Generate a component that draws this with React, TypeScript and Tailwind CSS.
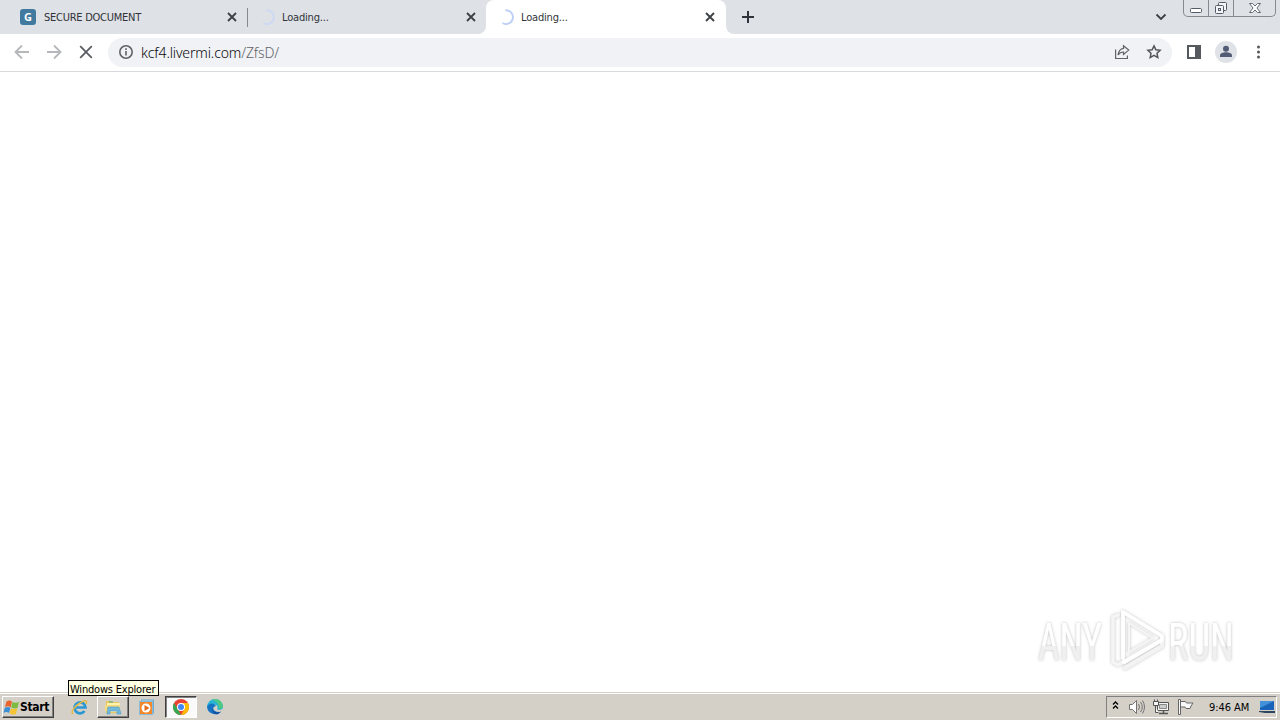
import React from 'react';

const UI = "font-['DejaVu_Sans_Condensed','DejaVu_Sans',sans-serif] [font-stretch:condensed]";

function Close({ className = '' }: { className?: string }) {
  return (
    <svg className={`shrink-0 ${className}`} width="10" height="10" viewBox="0 0 10 10" stroke="#3c4043" strokeWidth="1.8">
      <path d="M1 1l8 8M9 1L1 9" />
    </svg>
  );
}

function Spinner({ color }: { color: string }) {
  return (
    <svg className="shrink-0" width="16" height="16" viewBox="0 0 16 16" fill="none" stroke={color} strokeWidth="2">
      <path d="M7.500 1.200A6.900 6.900 0 1 1 4.500 14" />
    </svg>
  );
}

function TabBar() {
  return (
    <header className="flex h-[34px] shrink-0 bg-[#dee1e6] text-[#303338]">
      <div className="flex h-[34px] w-[247px] items-center pl-5">
        <div className="flex size-4 items-center justify-center rounded-[3px] bg-[#41799f] text-white">
          <span className="font-['Open_Sans',sans-serif] text-[11px] leading-4 font-bold [font-stretch:normal]">G</span>
        </div>
        <span className="ml-2 w-[183px] pt-[2px] text-[11px] tracking-[-0.25px]">SECURE DOCUMENT</span>
        <Close />
      </div>
      <div className="mt-2 h-[19px] w-px bg-[#858991]" />
      <div className="flex h-[34px] w-[238px] items-center bg-[#dee1e6] pl-[11px]">
        <Spinner color="#cdd8f3" />
        <span className="ml-[7px] w-[184px] pt-[2px] text-[11px] tracking-[-0.18px]">Loading...</span>
        <Close />
      </div>
      <div className="relative flex h-[34px] w-[240px] items-center rounded-t-lg bg-white pl-3">
        <svg className="absolute bottom-0 -left-2" width="8" height="8" fill="#fff"><path d="M8 0v8H0a8 8 0 0 0 8-8" /></svg>
        <svg className="absolute -right-2 bottom-0" width="8" height="8" fill="#fff"><path d="M0 0v8h8a8 8 0 0 1-8-8" /></svg>
        <Spinner color="#bfd0f7" />
        <span className="ml-[7px] w-[184px] pt-[2px] text-[11px] tracking-[-0.18px]">Loading...</span>
        <Close />
      </div>
      <svg className="mt-[11px] ml-4" width="12" height="12" stroke="#303339" strokeWidth="2"><path d="M6 0v12M0 6h12" /></svg>
      <svg className="mt-[13px] ml-[401px]" width="12" height="8" fill="none" stroke="#3c4043" strokeWidth="1.8"><path d="M1.5 1.5L6 6l4.5-4.5" /></svg>
      <div className="ml-4 flex h-[17px] w-[93px] rounded-b-[5px] border border-t-0 border-[#858990]">
        <div className="flex w-[25px] justify-center border-r border-[#858990] pt-2">
          <svg width="12" height="5" fill="#fff" stroke="#555b67"><rect x=".5" y=".5" width="11" height="4" rx="1" /></svg>
        </div>
        <div className="flex w-[25px] justify-center border-r border-[#858990] pt-[2px]">
          <svg width="13" height="13" fill="#f4f5f7" stroke="#555b67">
            <rect x="3.5" y=".5" width="8" height="8" rx="1" /><rect x=".5" y="3.5" width="8" height="8" rx="1" /><rect x="3.5" y="6.5" width="2" height="2" />
          </svg>
        </div>
        <div className="flex flex-1 justify-center pt-[3px]">
          <svg width="12" height="10" fill="#fff" stroke="#636975" strokeWidth="1"><path d="M.5.5h3L6 3 8.500.5h3L8 5l3.500 4.500h-3L6 7 3.500 9.500h-3L4 5z" /></svg>
        </div>
      </div>
    </header>
  );
}

function Toolbar() {
  return (
    <nav className="flex h-[38px] shrink-0 items-center border-b border-[#d7d9dc] bg-white pl-[14px]">
      <svg className="-mt-px" width="16" height="16" fill="none" stroke="#b5b7ba" strokeWidth="1.8"><path d="M15 8H2M8 1.500L1.500 8 8 14.500" /></svg>
      <svg className="-mt-px ml-4" width="16" height="16" fill="none" stroke="#b5b7ba" strokeWidth="1.8"><path d="M1 8h13M8 1.500L14.500 8 8 14.500" /></svg>
      <svg className="-mt-px ml-4" width="16" height="16" fill="none" stroke="#5a5d61" strokeWidth="1.8"><path d="M2.200 2.200l11.600 11.600M13.800 2.200L2.200 13.800" /></svg>
      <div className="ml-[14px] flex h-[29px] w-[1064px] items-center rounded-full bg-[#f0f2f5] pl-[11px]">
        <svg className="-mt-px" width="14" height="14" fill="none" stroke="#5f6368" strokeWidth="1.6"><circle cx="7" cy="7" r="6.200" /><path d="M7 6v4.500M7 3.300v1.600" /></svg>
        <div className="ml-2 w-[973px] pt-px font-['Noto_Sans',sans-serif] text-[14px] leading-[18px] font-light tracking-[-0.13px] text-[#08090b] [font-stretch:normal]">
          kcf4.livermi.com<span className="text-[#5f6368]">/ZfsD/</span>
        </div>
        <svg className="-mt-[2px]" width="16" height="16" fill="none" stroke="#5f6368" strokeWidth="1.2">
          <path d="M1.600 5.500v9h11.800v-3M9.500 1.700l5.200 4.400-5.200 4.400V8C7 8 5.400 9 4 11c.5-3.500 2.200-6.100 5.500-6.600z" />
        </svg>
        <svg className="-mt-px ml-4" width="16" height="16" fill="none" stroke="#51555a" strokeWidth="1.5">
          <path d="M8 1.900l1.850 3.900 4.250.55-3.100 2.950.8 4.250L8 11.450l-3.800 2.100.8-4.250L1.900 6.350l4.250-.55z" />
        </svg>
      </div>
      <svg className="-mt-px ml-[15px]" width="14" height="14" fill="none" stroke="#55585d" strokeWidth="2"><path d="M1 1h12v12H1z" /><path d="M9 1h4v12H9z" fill="#55585d" /></svg>
      <svg className="-mt-px ml-[14px]" width="22" height="22"><circle cx="11" cy="11" r="11" fill="#dfe2e6" /><circle cx="11" cy="7.700" r="3" fill="#525d75" /><path d="M5 16v-1.500c0-2 3-3.200 6-3.200s6 1.200 6 3.200V16z" fill="#525d75" /></svg>
      <svg className="-mt-px ml-[19px]" width="5" height="14" fill="#55585d"><circle cx="2.500" cy="2" r="1.500" /><circle cx="2.500" cy="7" r="1.500" /><circle cx="2.500" cy="12" r="1.500" /></svg>
    </nav>
  );
}

function Watermark() {
  return (
    <svg className="mr-9 mb-4 overflow-visible" width="216" height="72" viewBox="0 0 216 72">
      <defs>
        <filter id="soft" x="-20%" y="-20%" width="140%" height="140%">
          <feDropShadow dx="0" dy="0" stdDeviation="1.5" floodColor="#777" floodOpacity=".5" />
        </filter>
        <linearGradient id="face" x1="0" y1="0" x2="0" y2="1">
          <stop offset=".56" stopColor="#fff" /><stop offset=".57" stopColor="#f0f0f0" />
        </linearGradient>
      </defs>
      <g filter="url(#soft)" fill="url(#face)" fontFamily="Roboto" fontSize="51" fontWeight="400">
        <text x="10" y="55.500" textLength="64" lengthAdjust="spacingAndGlyphs">ANY</text>
        <text x="140" y="55.500" textLength="66" lengthAdjust="spacingAndGlyphs">RUN</text>
      </g>
      <g filter="url(#soft)" fill="none" strokeLinejoin="round" strokeLinecap="round">
        <path d="M90 11l-5 2v45l5 3 5-3" stroke="#f5f5f5" strokeWidth="3.500" />
        <path d="M97 64l37-22v-4" stroke="#f3f3f3" strokeWidth="4" />
        <path d="M95 54V8l39 24v4L96 58" stroke="#fff" strokeWidth="3.800" />
        <path d="M101 19l24 15-24 14z" stroke="#f5f5f5" strokeWidth="2" />
      </g>
    </svg>
  );
}

function Explorer() {
  return (
    <svg width="18" height="16" viewBox="0 0 18 16">
      <path d="M2 2h5l1 1h7v11H2z" fill="#e5c85e" /><path d="M3 4h13v9H3z" fill="#fff2ad" />
      <path d="M1 6h15v6H1z" fill="#f3db7d" /><path d="M4 8h11l2 7h-4v-3H6v3H3z" fill="#72b9dc" stroke="#4c9cc8" strokeWidth=".6" /><path d="M5 3h4" stroke="#50a878" />
    </svg>
  );
}

function Taskbar() {
  return (
    <footer className="flex h-7 shrink-0 items-start border-t border-[#d4d0c8] bg-[#d4d0c8] pl-[2px] text-black shadow-[inset_0_1px_0_#fff]">
      <button className="mt-[3px] flex h-[22px] w-[52px] items-center border border-t-white border-r-[#404040] border-b-[#404040] border-l-white shadow-[inset_-1px_-1px_0_#808080]">
        <svg className="shrink-0" width="17" height="17" viewBox="0 0 17 17">
          <path d="M3.500 2.500q3-2 5.500 0L7.700 8.200Q5 6.500 2 8.200z" fill="#e9632c" /><path d="M9.500 3q3.500 1.500 6.500 0L14.500 9q-3 1.300-6.300-.5z" fill="#7dbb42" />
          <path d="M1.800 8.700q3-1.500 5.700 0L6 14q-2.500-1.800-5.500 0z" fill="#3b8fd5" /><path d="M8 9.200q3 1.500 6.300.4L13 15q-3.500 1.300-6.500-.7z" fill="#f5c333" />
        </svg>
        <span className="text-[12px] leading-4 font-bold tracking-[-0.3px]">Start</span>
      </button>
      <svg className="mt-[6px] ml-[17px]" width="17" height="17" viewBox="0 0 17 17" fill="none">
        <path d="M13.500 12a5.500 5.500 0 1 1 1-3.500H5" stroke="#2c98d3" strokeWidth="2.700" /><path d="M2 15c-3-2 2-8 7-11s8-3 6 1" stroke="#e4ba42" strokeWidth="1.500" />
      </svg>
      <div className="relative mt-[3px] ml-[9px] flex h-[22px] w-8 items-center justify-center border border-t-white border-r-[#404040] border-b-[#404040] border-l-white shadow-[inset_-1px_-1px_0_#808080]">
        <Explorer />
        <div className="absolute -top-[17px] -left-[30px] flex h-4 w-[91px] items-center border border-black bg-[#ffffe1] pt-[2px] pl-px text-[11px] leading-[13px] tracking-[-0.2px] whitespace-nowrap">Windows Explorer</div>
      </div>
      <svg className="mt-[6px] ml-[9px]" width="17" height="17" viewBox="0 0 17 17">
        <rect x="3.500" y="1" width="12" height="13" fill="#b9dff2" stroke="#70a9cc" /><rect x="1.500" y="2.500" width="13" height="13" fill="#f48727" stroke="#8abada" /><circle cx="8" cy="9" r="4.500" fill="#fff" /><path d="M6.500 6l5 3-5 3z" fill="#e56a1a" />
      </svg>
      <div className="mt-[3px] ml-[10px] flex h-[22px] w-8 items-center justify-center border border-t-[#404040] border-r-white border-b-white border-l-[#404040] bg-[#fafafa] shadow-[inset_1px_1px_0_#808080]">
        <svg width="16" height="16" viewBox="0 0 16 16">
          <circle cx="8" cy="8" r="8" fill="#ea4335" /><path d="M1.070 4L4.530 10 8 16A8 8 0 0 1 1.070 4z" fill="#34a853" /><path d="M8 4h6.930A8 8 0 0 1 8 16l3.470-6z" fill="#fbbc05" />
          <circle cx="8" cy="8" r="4" fill="#fff" /><circle cx="8" cy="8" r="3" fill="#4285f4" />
        </svg>
      </div>
      <svg className="mt-[6px] ml-[10px]" width="16" height="16" viewBox="0 0 16 16">
        <path d="M0 8a8 8 0 0 1 16 0c0 3-4 4-6 2 3-4-5-7-10-2z" fill="#2bb5d4" /><path d="M8 0a8 8 0 0 1 8 7c0 2-2 3-4 3 0-5-2-8-7-9z" fill="#4fc980" />
        <path d="M0 8c1-4 7-5 9-1-5 1-3 7 5 5.500A8 8 0 0 1 0 8z" fill="#1674c5" /><path d="M5.500 9c0 4 4 5.500 8.500 3.500-3 5-10 3-8.500-3.500z" fill="#1251a0" /><path d="M9 7.500c1 1-1 1.500 0 2.800 1 1.300 4 1 6 0l-1 2c-5 1.500-8-2-5-4.800z" fill="#d4d0c8" />
      </svg>
      <div className="mt-[3px] mr-[3px] ml-auto flex h-[22px] w-[171px] items-center border border-t-[#808080] border-r-white border-b-white border-l-[#808080] pl-[5px]">
        <svg className="-mt-[3px]" width="7" height="9" fill="none" stroke="#000" strokeWidth="1.300"><path d="M1 3.500l2.500-2.500L6 3.500M1 7.500L3.500 5 6 7.500" /></svg>
        <svg className="ml-[10px]" width="16" height="16" fill="#fff" stroke="#737373"><path d="M.5 5.500h3l4-4v13l-4-4h-3z" /><path d="M9.500 5q2 3 0 6M11.500 3q3.500 5 0 10M13.500 1.500q4 6.500 0 13" fill="none" /></svg>
        <svg className="ml-2" width="16" height="16" fill="#f5f5f5" stroke="#555"><path d="M4.500 3.500h11v8h-11z" /><path d="M6.500 5.500h7v4h-7z" fill="#ccc" stroke="#888" /><path d="M.5 2.500h5v4h-5zM1.500.5v2M4.500.5v2M2.500 6.500v7h3" /><path d="M6 14.500h9M10.500 12v2" strokeWidth="1.500" /></svg>
        <svg className="ml-2" width="17" height="16" fill="#f8f8f8" stroke="#666"><path d="M1.500.5h2v15h-2zM3.500 2.500h5l1 1.500h6.500l-2 3-1 2.500h-4l-1-1.500H3.500z" /></svg>
        <span className="ml-[15px] w-[50px] pt-[2px] text-[11px] tracking-[-0.05px] whitespace-nowrap">9:46 AM</span>
        <svg className="shrink-0" width="16" height="14"><path d="M1 1h14v9H1z" fill="#1964b8" /><path d="M1 1h14L1 8z" fill="#4391d8" /><path d="M0 11h16v2H6l-6-1z" fill="#2b4460" /></svg>
      </div>
    </footer>
  );
}

export default function App() {
  return (
    <div className={`flex h-[720px] w-[1280px] flex-col overflow-hidden bg-white ${UI}`}>
      <TabBar />
      <Toolbar />
      <main className="flex min-h-0 flex-1 items-end justify-end bg-white"><Watermark /></main>
      <Taskbar />
    </div>
  );
}
